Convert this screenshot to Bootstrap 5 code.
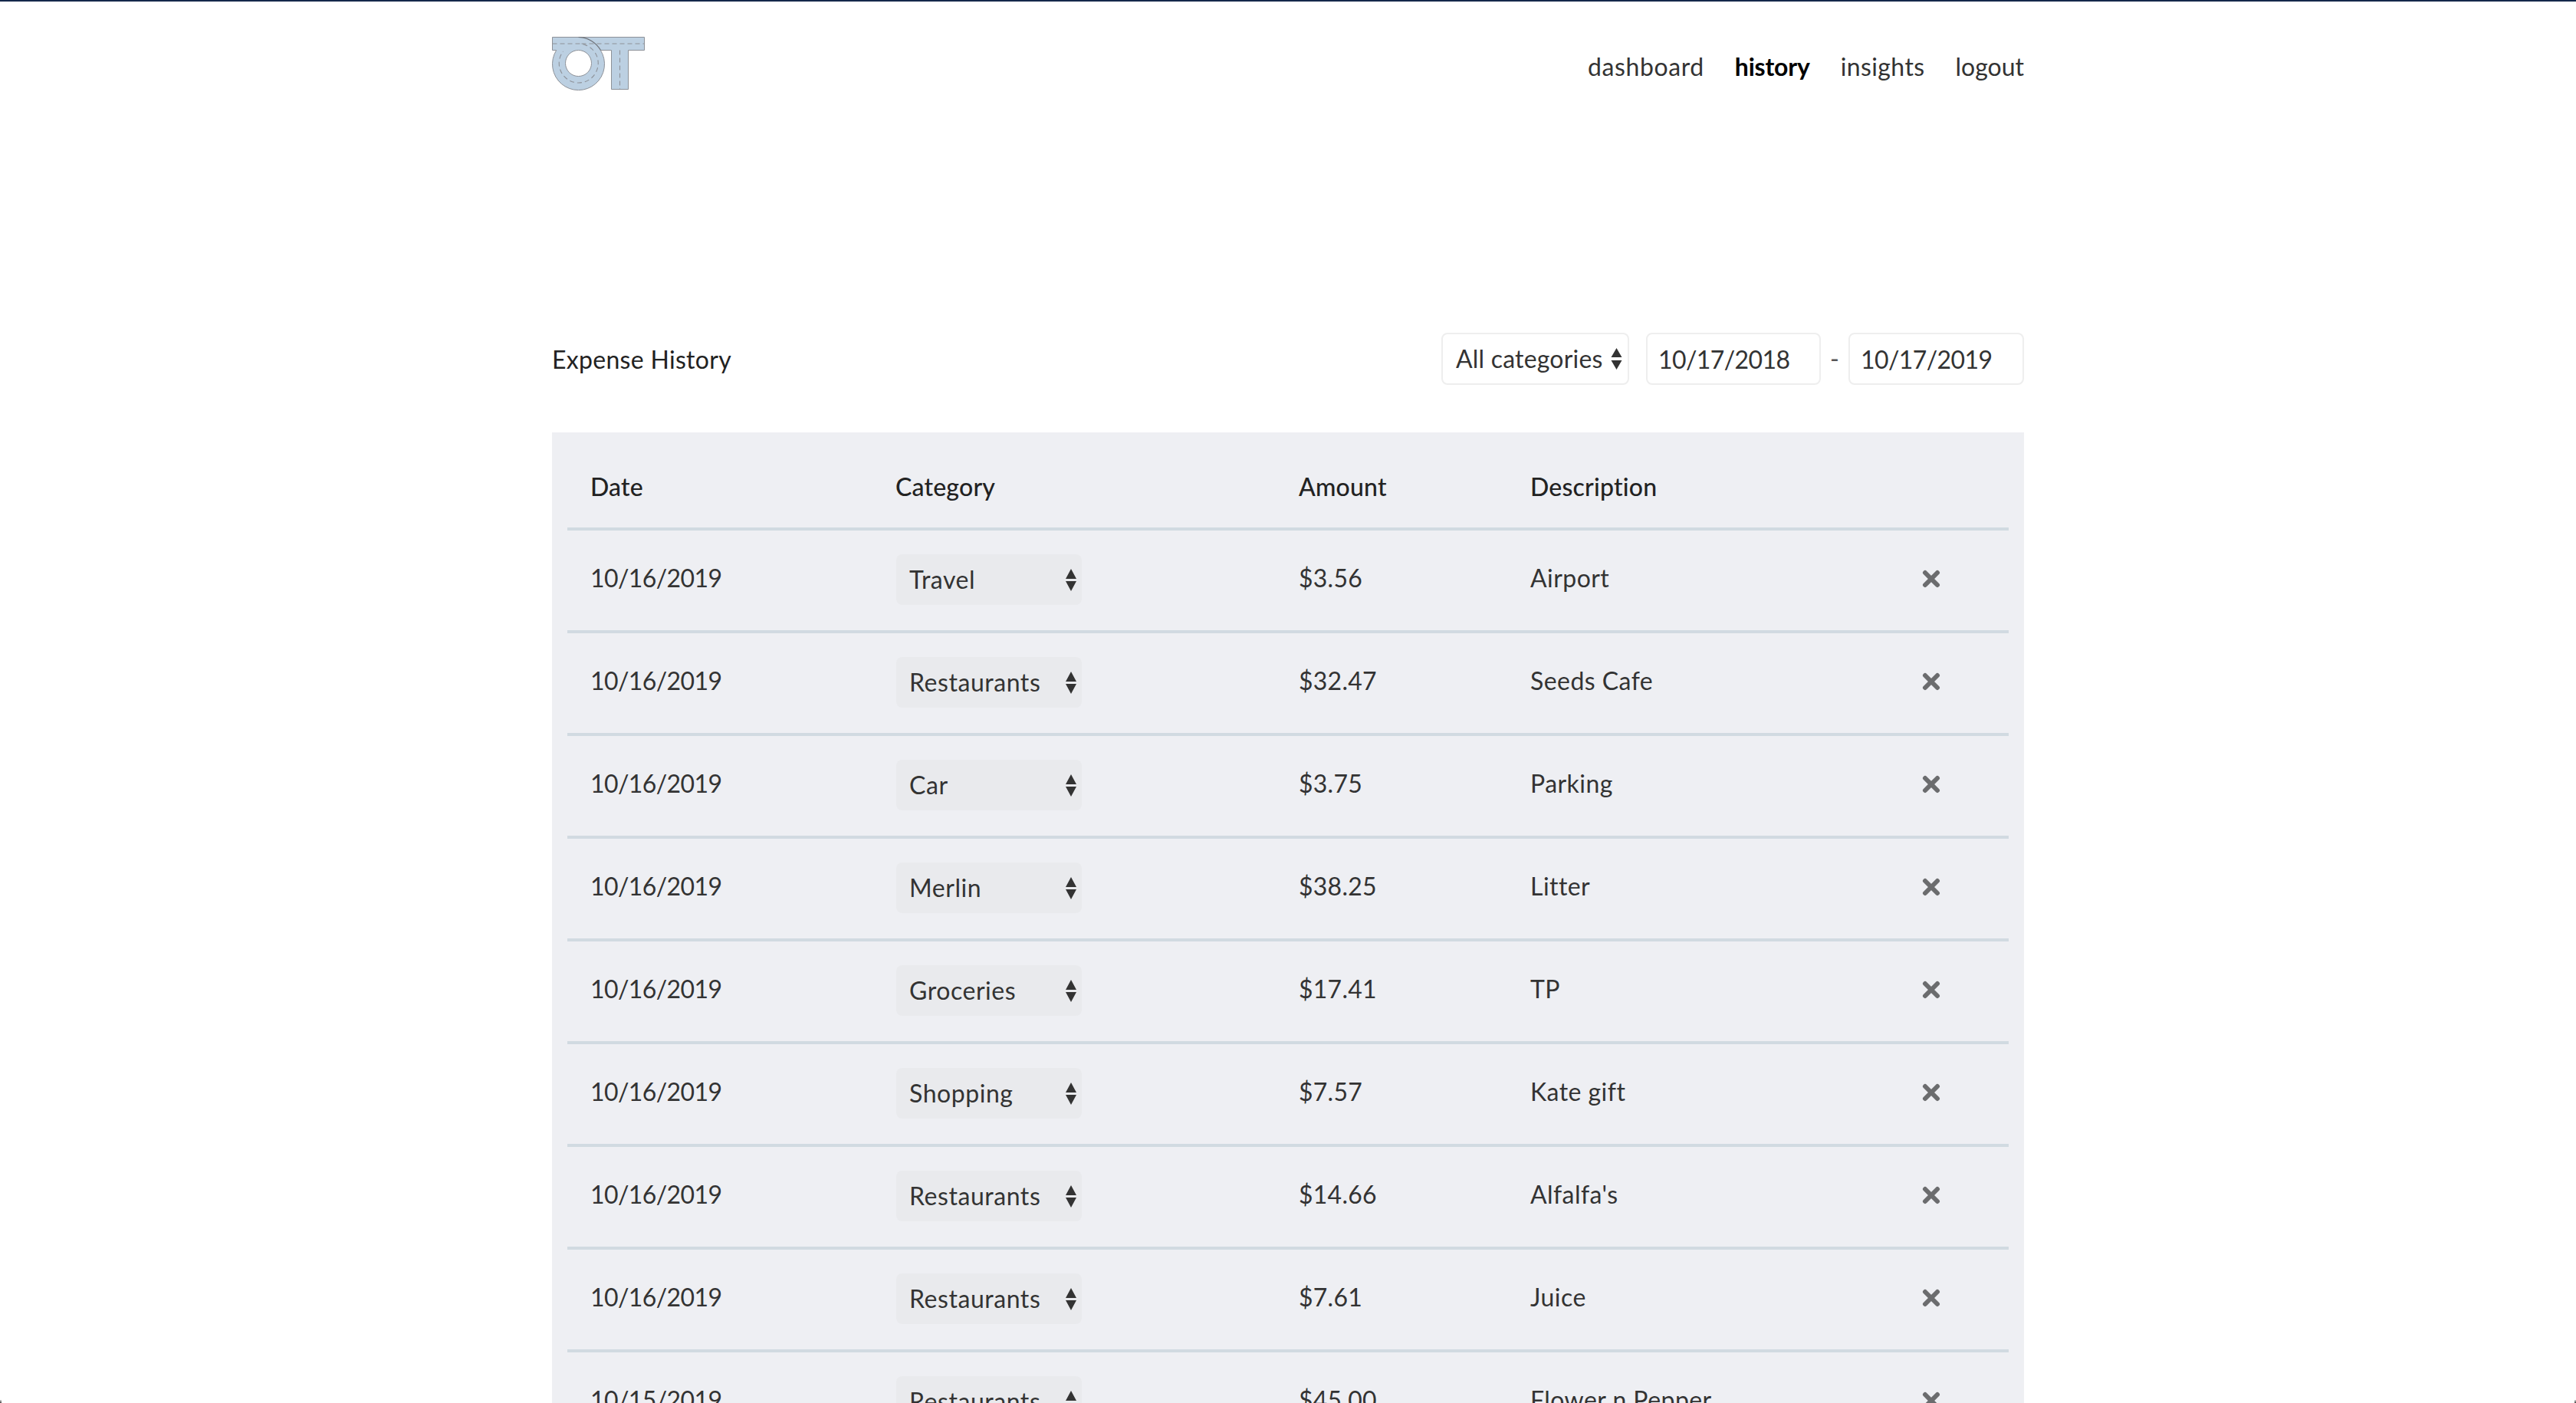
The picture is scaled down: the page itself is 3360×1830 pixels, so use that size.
<!DOCTYPE html>
<html lang="en">
<head>
<meta charset="utf-8">
<title>Expense History</title>
<link href="https://cdn.jsdelivr.net/npm/bootstrap@5.3.0/dist/css/bootstrap.min.css" rel="stylesheet">
<style>
html,body{height:100%;overflow:hidden}
body{font-family:"Lato","Liberation Sans",sans-serif;font-size:32px;color:#333;border-top:2px solid #14284b;background:#fff}
.page-wrap{width:1920px;margin:0 auto}
.top-bar{height:144px;padding-top:46px;align-items:flex-start}
.logo-svg{display:block;width:121px;height:70px}
.nav-items{gap:40px;padding-top:20px}
.nav-items a{color:#333;text-decoration:none;line-height:38px;font-size:32px;letter-spacing:.4px}
.nav-items a:first-child{letter-spacing:.6px}
.nav-items a:last-child{letter-spacing:0}
.nav-items a.is-current{color:#000;font-weight:700;letter-spacing:-.2px}
.head-row{margin-top:288px;height:68px;margin-bottom:62px}
.head-title{font-size:32px;line-height:68px;color:#222;letter-spacing:.3px;padding-top:2px}
.ctl{height:68px;border:2px solid #eee;border-radius:8px;font-size:32px;color:#333;padding:0 14px;background-color:#fff;box-shadow:none}
.ctl:focus{border-color:#eee;box-shadow:none}
select.ctl{width:245px;padding:0 30px 0 17px;margin-right:22px;letter-spacing:.2px;background-image:url("data:image/svg+xml,%3Csvg xmlns='http://www.w3.org/2000/svg' width='15' height='28'%3E%3Cpath d='M7.500 0l7 12H.500zM.500 16h14l-7 12z' fill='%23333'/%3E%3C/svg%3E");background-repeat:no-repeat;background-position:right 7px center;background-size:15px 28px}
input.ctl{width:228px;letter-spacing:-.6px}
input.ctl.last-date{width:229px}
.dash-sep{width:36px;text-align:center;line-height:68px;color:#555}
.ledger{background:#eeeff3;padding:0 20px}
.ledger table{table-layout:fixed;width:1880px;margin:0;--bs-table-bg:transparent;color:#333;border-collapse:separate;border-spacing:0}
.ledger th,.ledger td{padding:0 0 7px 30px;vertical-align:middle;border-bottom:4px solid #d1dae1;font-size:32px;box-shadow:none;background:transparent;color:#333;letter-spacing:.45px}
.ledger th{font-weight:500;height:128px;color:#222;padding-top:17px;padding-bottom:0;letter-spacing:.2px}
.ledger td{height:134px}
.ledger td.date-cell{letter-spacing:-.6px}
.ledger td.amt-cell{letter-spacing:.25px}
.ledger td.sel-cell{padding-bottom:2px}
.ledger td.x-cell{padding-bottom:5px}
.cell-select{width:242px;height:66px;margin-left:1px;border:0;border-radius:8px;font-size:32px;letter-spacing:.55px;padding:0 17px;color:#333;background-color:#e9eaed;background-image:url("data:image/svg+xml,%3Csvg xmlns='http://www.w3.org/2000/svg' width='14' height='29'%3E%3Cpath d='M7 0l7 13H0zM0 16h14l-7 13z' fill='%23333'/%3E%3C/svg%3E");background-repeat:no-repeat;background-position:right 7px center;background-size:14px 29px}
.cell-select:focus{box-shadow:none}
.x-btn{display:block;width:24px;height:24px;margin-left:21px}
.edge-mark{position:fixed;bottom:0;width:2px;height:4px;background:linear-gradient(#d8d8d8,#444)}
.edge-left{left:0}
.edge-right{right:0}
</style>
</head>
<body>
<div class="page-wrap">
  <nav class="top-bar d-flex justify-content-between">
    <a href="#" aria-label="OT">
      <svg class="logo-svg" viewBox="-0.5 -0.5 121 70" xmlns="http://www.w3.org/2000/svg">
        <path d="M0 0H120V17H99V68H77V17H62.800A34 34 0 1 1 5.200 17H0Z" fill="#bcd0e2" stroke="#8d9198" stroke-width="1"/>
        <circle cx="34" cy="34" r="17" fill="#fff" stroke="#8d9198" stroke-width="1"/>
        <path d="M0 8.500H34A25.500 25.500 0 1 1 14 18.500" fill="none" stroke="#8d9198" stroke-width="1.100" stroke-dasharray="6 4"/>
        <path d="M38 8.500H120M88 17V68" fill="none" stroke="#8d9198" stroke-width="1.100" stroke-dasharray="6 4"/>
        <path d="M34 0A34 34 0 0 1 63 17" fill="none" stroke="#6f7278" stroke-width="1.200"/>
      </svg>
    </a>
    <div class="nav-items d-flex">
      <a href="#">dashboard</a>
      <a href="#" class="is-current">history</a>
      <a href="#">insights</a>
      <a href="#">logout</a>
    </div>
  </nav>

  <div class="head-row d-flex justify-content-between align-items-center">
    <div class="head-title">Expense History</div>
    <div class="d-flex align-items-center">
      <select class="form-select ctl" aria-label="Category filter"><option>All categories</option></select>
      <input class="form-control ctl" value="10/17/2018" aria-label="From">
      <span class="dash-sep">-</span>
      <input class="form-control ctl last-date" value="10/17/2019" aria-label="To">
    </div>
  </div>

  <div class="ledger">
    <table class="table">
      <colgroup><col style="width:398px"><col style="width:526px"><col style="width:302px"><col style="width:490px"><col></colgroup>
      <thead>
        <tr><th>Date</th><th>Category</th><th>Amount</th><th>Description</th><th></th></tr>
      </thead>
      <tbody id="rows"></tbody>
    </table>
  </div>
</div>
<div class="edge-mark edge-left"></div>
<div class="edge-mark edge-right"></div>
<script src="https://cdn.jsdelivr.net/npm/bootstrap@5.3.0/dist/js/bootstrap.bundle.min.js"></script>
<script>
const data=[
["10/16/2019","Travel","$3.56","Airport"],
["10/16/2019","Restaurants","$32.47","Seeds Cafe"],
["10/16/2019","Car","$3.75","Parking"],
["10/16/2019","Merlin","$38.25","Litter"],
["10/16/2019","Groceries","$17.41","TP"],
["10/16/2019","Shopping","$7.57","Kate gift"],
["10/16/2019","Restaurants","$14.66","Alfalfa's"],
["10/16/2019","Restaurants","$7.61","Juice"],
["10/15/2019","Restaurants","$45.00","Flower n Pepper"]];
document.getElementById('rows').innerHTML=data.map(r=>`<tr><td class="date-cell">${r[0]}</td><td class="sel-cell"><select class="form-select cell-select" aria-label="Category"><option>${r[1]}</option></select></td><td class="amt-cell">${r[2]}</td><td>${r[3]}</td><td class="x-cell"><svg class="x-btn" viewBox="0 0 24 24" role="img" aria-label="Delete"><path d="M4 4L20 20M20 4L4 20" stroke="#6b6c6e" stroke-width="6" stroke-linecap="round"/></svg></td></tr>`).join('');
</script>
</body>
</html>
